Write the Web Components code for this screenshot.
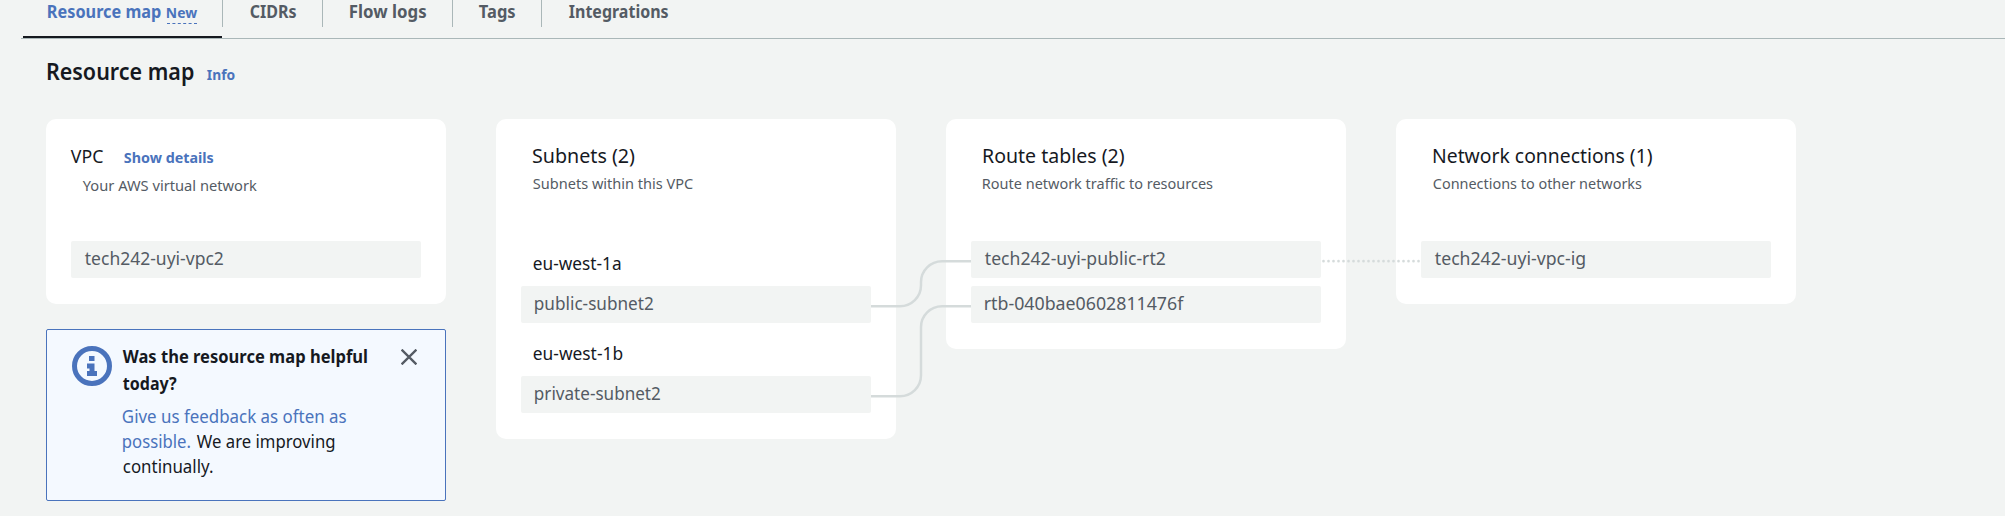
<!DOCTYPE html>
<html lang="en">
<head>
<meta charset="utf-8">
<title>Resource map</title>
<style>
html,body{margin:0;height:100%;overflow:hidden;background:#f2f4f3;font-family:"Noto Sans","Open Sans",sans-serif;color:#16191f}
</style>
</head>
<body>
<resource-page></resource-page>
<script>
const ctx = document.createElement('canvas').getContext('2d');

/* A single line of type fitted to an optical width: w = width, s = font size, l = line height, b = weight. */
class FitText extends HTMLElement {
  connectedCallback() {
    const a = (n, d) => this.getAttribute(n) || d;
    const w = +a('w'), s = +a('s', 17.5), l = +a('l', 28), b = a('b', 400);
    ctx.font = `${b} ${s}px "Noto Sans","Open Sans",sans-serif`;
    const m = ctx.measureText(this.textContent);
    const ink = m.actualBoundingBoxRight + m.actualBoundingBoxLeft;
    const k = w / ink;
    const nudge = s === 20 ? 0 : -0.2;
    this.attachShadow({mode: 'open'}).innerHTML = `<style>
      :host{display:block;flex:none;width:${w}px;height:${l}px;font:${b} ${s}px/${l}px "Noto Sans","Open Sans",sans-serif}
      span{display:inline-block;white-space:nowrap;transform-origin:0 0;transform:translateX(${m.actualBoundingBoxLeft * k + nudge}px) scaleX(${k})}
      </style><span><slot></slot></span>`;
  }
}
customElements.define('fit-text', FitText);

const define = (name, html) => customElements.define(name, class extends HTMLElement {
  constructor() {
    super();
    this.attachShadow({mode: 'open'}).innerHTML = html;
  }
});

define('map-node', `<style>
  :host{display:block;box-sizing:border-box;width:350px;height:37px;padding-left:13.5px;background:#f2f4f3;border-radius:2px;color:#545b64}
  :host(:not(:first-of-type)){margin-top:8px}
  </style><slot></slot>`);

define('zone-label', `<style>
  :host{display:block;padding-left:11.5px;height:45px}
  :host(:not(:first-of-type)){margin-top:8px}
  </style><slot></slot>`);

define('map-card', `<style>
  :host{display:block;box-sizing:border-box;width:400px;padding:0 25px 26px;background:#fff;border-radius:10px}
  header{box-sizing:border-box;height:122px;padding-top:23px}
  .title{display:flex;padding-left:11.5px}
  :host([flush]) header{padding-top:22px}
  :host([flush]) .title{padding-left:0;gap:20px}
  .desc{padding:3px 0 0 11.5px;color:#545b64}
  </style>
  <header><div class="title"><slot name="title"></slot></div><div class="desc"><slot name="desc"></slot></div></header>
  <slot></slot>`);

define('tab-item', `<style>
  :host{display:block;box-sizing:border-box;height:27px;border-right:1px solid #aab7b8;padding:0 25px 0 26.5px;color:#545b64}
  :host([wide]){border-left:1px solid #aab7b8;padding:0 25px 0 27px}
  :host([last]){border:0}
  :host([active]){display:flex;gap:5px;height:38px;border:0;border-bottom:2px solid #16191f;padding:0 25px 0 25px;color:#4a73bc}
  </style><slot></slot>`);

define('tab-bar', `<style>
  :host{display:flex;box-sizing:border-box;height:39px;margin-left:21px;padding-left:2px;border-bottom:1px solid #aab7b8}
  </style><slot></slot>`);

define('feedback-note', `<style>
  :host{display:flex;box-sizing:border-box;width:400px;height:172px;margin-top:25px;padding:16px 0 0 25px;background:#f4f9ff;border:1px solid #4a73bc;border-radius:2px;color:#16191f}
  svg{display:block;flex:none}
  .text{margin-left:10.5px;width:245px}
  .row{display:flex;gap:7px}
  .body{margin-top:7px}
  .link{color:#4a73bc}
  .x{margin:3px 0 0 33px}
  </style>
  <svg width="40" height="40" viewBox="0 0 40 40"><circle cx="20" cy="20" r="17.5" fill="none" stroke="#4a73bc" stroke-width="5"/><path fill="#4a73bc" d="M17 10h5.5v5H17zM15 17.5h7.5v7.5H25v5H15v-5h2.5v-2.5H15z"/></svg>
  <div class="text">
    <fit-text w="244" l="27" b="700" style="margin-top:-3px">Was the resource map helpful</fit-text>
    <fit-text w="53.5" l="27" b="700">today?</fit-text>
    <div class="body">
      <fit-text class="link" w="223.5" l="25">Give us feedback as often as</fit-text>
      <div class="row"><fit-text class="link" w="67.5" l="25">possible.</fit-text><fit-text w="138" l="25">We are improving</fit-text></div>
      <fit-text w="90" l="25">continually.</fit-text>
    </div>
  </div>
  <svg class="x" width="16" height="16" viewBox="0 0 16 16"><path d="M.6.6 15.4 15.4M15.4.6.6 15.4" stroke="#545b64" stroke-width="2.3" fill="none"/></svg>`);

define('map-links', `<style>
  :host{position:absolute;pointer-events:none}
  svg{display:block}
  </style>
  <svg width="560" height="300" viewBox="871 119 560 300" fill="none" stroke="#d5dbdb" stroke-width="2.5">
  <path d="M871 306.2H900A21 21 0 0 0 921 285.2V282.2A21 21 0 0 1 942 261.2H971"/>
  <path d="M871 396.2H900A21 21 0 0 0 921 375.2V327.2A21 21 0 0 1 942 306.2H971"/>
  <path d="M1323.5 261.2H1420" stroke-linecap="round" stroke-width="2.7" stroke-dasharray="0 5"/></svg>`);

define('resource-page', `<style>
  :host{display:block;width:2005px;height:516px;overflow:hidden}
  .heading{display:flex;gap:13.5px;padding-left:47.5px;height:80px}
  .map{display:flex;align-items:flex-start;gap:50px;padding-left:46px}
  .canvas{position:relative}
  map-links{left:871px;top:0}
  .link{color:#4a73bc}
  .details{margin-top:1px}
  .new{height:23px;border-bottom:1px dashed #4a73bc}
  </style>
  <tab-bar>
    <tab-item active><fit-text w="113.5" l="23" b="700">Resource map</fit-text><div class="new"><fit-text w="30.5" s="15" l="24" b="700">New</fit-text></div></tab-item>
    <tab-item wide><fit-text w="47" l="23" b="700">CIDRs</fit-text></tab-item>
    <tab-item><fit-text w="77" l="23" b="700">Flow logs</fit-text></tab-item>
    <tab-item><fit-text w="37" l="23" b="700">Tags</fit-text></tab-item>
    <tab-item last><fit-text w="100" l="23" b="700">Integrations</fit-text></tab-item>
  </tab-bar>
  <div class="heading"><fit-text w="145.5" s="22.5" l="65" b="600">Resource map</fit-text><fit-text class="link" w="28" s="15" l="70" b="700">Info</fit-text></div>
  <div class="canvas">
  <div class="map">
    <div>
      <map-card flush>
        <fit-text slot="title" w="32.5" l="30">VPC</fit-text><fit-text slot="title" class="link details" w="89.5" s="15" l="30" b="700">Show details</fit-text>
        <fit-text slot="desc" w="174" s="15" l="20">Your AWS virtual network</fit-text>
        <map-node><fit-text w="139" l="35">tech242-uyi-vpc2</fit-text></map-node>
      </map-card>
      <feedback-note></feedback-note>
    </div>
    <map-card>
      <fit-text slot="title" w="102" s="20" l="28">Subnets (2)</fit-text>
      <fit-text slot="desc" w="161" s="15" l="20">Subnets within this VPC</fit-text>
      <zone-label><fit-text w="88" l="45">eu-west-1a</fit-text></zone-label>
      <map-node><fit-text w="119" l="35">public-subnet2</fit-text></map-node>
      <zone-label><fit-text w="89.5" l="45">eu-west-1b</fit-text></zone-label>
      <map-node style="margin-top:0"><fit-text w="126" l="35">private-subnet2</fit-text></map-node>
    </map-card>
    <map-card>
      <fit-text slot="title" w="141.5" s="20" l="28">Route tables (2)</fit-text>
      <fit-text slot="desc" w="230" s="15" l="20">Route network traffic to resources</fit-text>
      <map-node><fit-text w="181" l="35">tech242-uyi-public-rt2</fit-text></map-node>
      <map-node><fit-text w="199.5" l="35">rtb-040bae0602811476f</fit-text></map-node>
    </map-card>
    <map-card>
      <fit-text slot="title" w="219.5" s="20" l="28">Network connections (1)</fit-text>
      <fit-text slot="desc" w="209" s="15" l="20">Connections to other networks</fit-text>
      <map-node><fit-text w="150.5" l="35">tech242-uyi-vpc-ig</fit-text></map-node>
    </map-card>
  </div>
  <map-links></map-links>
  </div>`);
</script>
</body>
</html>
